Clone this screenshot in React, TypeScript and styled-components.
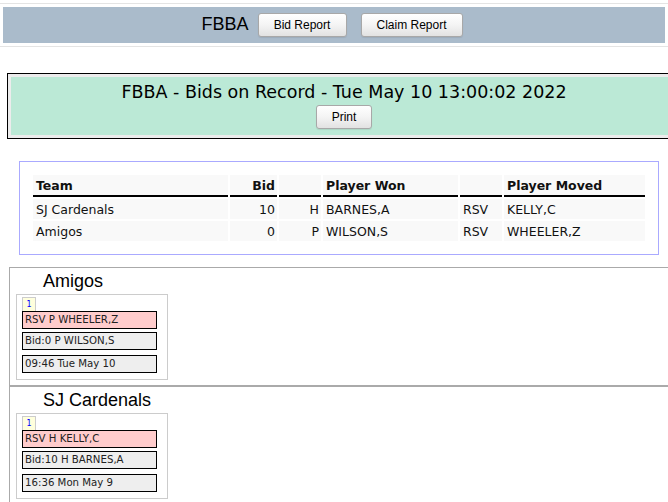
import React from "react";
import styled, { createGlobalStyle } from "styled-components";

const Global = createGlobalStyle`
  html, body { margin: 0; padding: 0; overflow: hidden; background: #fff; }
  body { font-family: "Liberation Sans", Arial, sans-serif; color: #000; }
`;

const Page = styled.div`
  width: 668px;
  display: flex;
  flex-direction: column;
`;

const HeaderOuter = styled.div`
  margin-top: 3px;
  border-top: 1px solid #e4e4e4;
  border-bottom: 1px solid #e4e4e4;
  padding: 3px 3px 3px 3px;
`;

const HeaderBar = styled.div`
  height: 36px;
  background: #aabbcb;
  display: flex;
  align-items: center;
  justify-content: center;
  padding-right: 4px;
`;

const Brand = styled.span`
  font-family: "Liberation Sans", Arial, sans-serif;
  font-size: 18px;
  margin-right: 9px;
  margin-top: -2px;
`;

const Btn = styled.button<{ $w: number; $ml?: number }>`
  width: ${(p) => p.$w}px;
  height: 24px;
  margin-left: ${(p) => p.$ml ?? 0}px;
  padding: 0;
  font-family: "Liberation Sans", Arial, sans-serif;
  font-size: 12px;
  color: #000;
  border: 1px solid #a8a8a8;
  border-radius: 3px;
  background: linear-gradient(#ffffff, #f4f4f4 50%, #e2e2e2);
  box-shadow: 0 1px 1px rgba(0, 0, 0, 0.08);
`;

const TitleBox = styled.div`
  margin: 26px 0 0 7px;
  width: 666px;
  border: 1px solid #000;
  background: #ececec;
  padding: 3px;
  flex-shrink: 0;
`;

const TitleInner = styled.div`
  background: #bbe9d6;
  padding: 4px 0 6px;
  display: flex;
  flex-direction: column;
  align-items: center;
`;

const TitleText = styled.div`
  font-family: "DejaVu Sans", Verdana, sans-serif;
  font-size: 17.5px;
  line-height: 22px;
  margin-bottom: 2px;
`;

const BidsBox = styled.div`
  margin: 22px 0 0 19px;
  border: 1px solid #aaaaff;
  padding: 11px;
  box-sizing: border-box;
  width: 640px;
`;

const Table = styled.table`
  width: 616px;
  border-spacing: 2px;
  table-layout: fixed;
  font-family: "DejaVu Sans", Verdana, sans-serif;
  font-size: 12.5px;
  color: #111;
`;

const Th = styled.th<{ $right?: boolean }>`
  background: #f9f9f9;
  text-align: ${(p) => (p.$right ? "right" : "left")};
  font-weight: bold;
  height: 20px;
  padding: 0 2px 0 3px;
  border-bottom: 2px solid #000;
`;

const Td = styled.td<{ $right?: boolean }>`
  background: #f9f9f9;
  text-align: ${(p) => (p.$right ? "right" : "left")};
  height: 20px;
  padding: 0 2px 0 3px;
`;

const Section = styled.div`
  margin-left: 9px;
  width: 680px;
  border: 1px solid #aaa;
  border-right: none;
  padding: 0 0 5px 6px;
  & + & { border-top: 1px solid #aaa; }
`;

const SectionWrap = styled.div`
  margin-top: 12px;
  display: flex;
  flex-direction: column;
`;

const TeamName = styled.div`
  font-family: "Liberation Sans", Arial, sans-serif;
  font-size: 18px;
  line-height: 22px;
  margin: 2px 0 2px 27px;
`;

const Card = styled.div`
  width: 152px;
  box-sizing: border-box;
  border: 1px solid #cccccc;
  padding: 2px 0 6px 5px;
`;

const Tab = styled.div`
  width: 14px;
  height: 14px;
  box-sizing: border-box;
  border: 1px solid #cccccc;
  border-bottom: none;
  background: #ffffdd;
  color: #0000ff;
  font-family: "DejaVu Sans", Verdana, sans-serif;
  font-size: 8px;
  line-height: 13px;
  text-align: center;
`;

const Slip = styled.div<{ $bg: string; $mt?: number }>`
  width: 135px;
  height: 18px;
  box-sizing: border-box;
  margin-top: ${(p) => p.$mt ?? 0}px;
  border: 1px solid #000;
  background: ${(p) => p.$bg};
  font-family: "DejaVu Sans", Verdana, sans-serif;
  font-size: 10.2px;
  line-height: 16px;
  padding-left: 2px;
  color: #222;
  white-space: nowrap;
`;

const rows = [
  { team: "SJ Cardenals", bid: "10", pos: "H", won: "BARNES,A", st: "RSV", moved: "KELLY,C" },
  { team: "Amigos", bid: "0", pos: "P", won: "WILSON,S", st: "RSV", moved: "WHEELER,Z" },
];

const teams = [
  { name: "Amigos", moved: "RSV P WHEELER,Z", bid: "Bid:0 P WILSON,S", time: "09:46 Tue May 10" },
  { name: "SJ Cardenals", moved: "RSV H KELLY,C", bid: "Bid:10 H BARNES,A", time: "16:36 Mon May 9" },
];

const colWidths = [195, 47, 42, 135, 42, 141];

export default function App() {
  return (
    <Page>
      <Global />
      <HeaderOuter>
        <HeaderBar>
          <Brand>FBBA</Brand>
          <Btn $w={89}>Bid Report</Btn>
          <Btn $w={102} $ml={14}>Claim Report</Btn>
        </HeaderBar>
      </HeaderOuter>

      <TitleBox>
        <TitleInner>
          <TitleText>FBBA - Bids on Record - Tue May 10 13:00:02 2022</TitleText>
          <Btn $w={56}>Print</Btn>
        </TitleInner>
      </TitleBox>

      <BidsBox>
        <Table>
          <colgroup>
            {colWidths.map((w, i) => (
              <col key={i} style={{ width: w }} />
            ))}
          </colgroup>
          <thead>
            <tr>
              <Th>Team</Th>
              <Th $right>Bid</Th>
              <Th />
              <Th>Player Won</Th>
              <Th />
              <Th>Player Moved</Th>
            </tr>
          </thead>
          <tbody>
            {rows.map((r) => (
              <tr key={r.team}>
                <Td>{r.team}</Td>
                <Td $right>{r.bid}</Td>
                <Td $right>{r.pos}</Td>
                <Td>{r.won}</Td>
                <Td>{r.st}</Td>
                <Td>{r.moved}</Td>
              </tr>
            ))}
          </tbody>
        </Table>
      </BidsBox>

      <SectionWrap>
        {teams.map((t) => (
          <Section key={t.name}>
            <TeamName>{t.name}</TeamName>
            <Card>
              <Tab>1</Tab>
              <Slip $bg="#ffcccc">{t.moved}</Slip>
              <Slip $bg="#eeeeee" $mt={3}>{t.bid}</Slip>
              <Slip $bg="#eeeeee" $mt={5}>{t.time}</Slip>
            </Card>
          </Section>
        ))}
      </SectionWrap>
    </Page>
  );
}
